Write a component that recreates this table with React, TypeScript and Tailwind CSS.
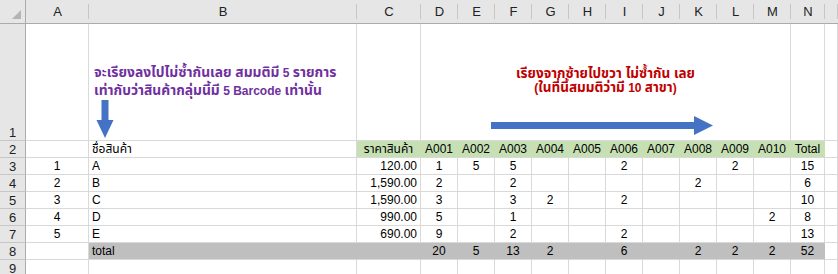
import type { ReactNode } from 'react';

const COLS = ['A', 'B', 'C', 'D', 'E', 'F', 'G', 'H', 'I', 'J', 'K', 'L', 'M', 'N', ''];
const BRANCHES = ['A001', 'A002', 'A003', 'A004', 'A005', 'A006', 'A007', 'A008', 'A009', 'A010'];

// qty per branch, index 0 = A001
const ROWS = [
  { no: 1, name: 'A', price: '120.00', qty: [1, 5, 5, null, null, 2, null, null, 2, null], total: 15 },
  { no: 2, name: 'B', price: '1,590.00', qty: [2, null, 2, null, null, null, null, 2, null, null], total: 6 },
  { no: 3, name: 'C', price: '1,590.00', qty: [3, null, 3, 2, null, 2, null, null, null, null], total: 10 },
  { no: 4, name: 'D', price: '990.00', qty: [5, null, 1, null, null, null, null, null, null, 2], total: 8 },
  { no: 5, name: 'E', price: '690.00', qty: [9, null, 2, null, null, 2, null, null, null, null], total: 13 },
];
const TOTALS = [20, 5, 13, 2, null, 6, null, 2, 2, 2];

type Fill = 'green' | 'gray' | undefined;

function Cell({
  children,
  align = 'left',
  fill,
  className = '',
}: {
  children?: ReactNode;
  align?: 'left' | 'center' | 'right';
  fill?: Fill;
  className?: string;
}) {
  const bg =
    fill === 'green'
      ? 'bg-[#c6e0b4] border-r-transparent'
      : fill === 'gray'
        ? 'bg-[#bfbfbf] border-r-transparent border-b-[#bfbfbf]'
        : 'bg-white border-r-[#d9d9d9]';
  const justify = align === 'center' ? 'justify-center' : align === 'right' ? 'justify-end' : 'justify-start';
  return (
    <div
      className={`flex items-end ${justify} border-r border-b border-b-[#d9d9d9] px-[3px] leading-[15px] whitespace-nowrap overflow-hidden ${bg} ${className}`}
    >
      {children}
    </div>
  );
}

function RowHead({ n }: { n: number }) {
  return (
    <div className="flex items-end justify-center bg-[#e6e6e6] border-r border-r-[#ababab] border-b border-b-[#c6c6c6] text-[#222] text-[13px] leading-[15px]">
      {n}
    </div>
  );
}

function DownArrow() {
  return (
    <svg width="18" height="38" viewBox="0 0 18 38" className="shrink-0 ml-[2px]">
      <path d="M5.5 0 H12.5 V20 H17.5 L9 38 L0.5 20 H5.5 Z" fill="#4472c4" />
    </svg>
  );
}

function RightArrow() {
  return (
    <svg width="222" height="19" viewBox="0 0 222 19" className="shrink-0">
      <path d="M0 6 H203 V0 L222 9.5 L203 19 V13 H0 Z" fill="#4472c4" />
    </svg>
  );
}

export default function App() {
  return (
    <div className="w-[838px] h-[274px] overflow-hidden bg-white font-['Liberation_Sans',Arial,'Noto_Sans_Thai','Noto_Sans',sans-serif] text-[12px] text-black">
      <div className="grid grid-cols-[26px_63px_268px_64px_repeat(10,37px)_34px_1fr] grid-rows-[24px_117px_repeat(8,17px)]">
        {/* column headers */}
        <div className="relative bg-[#e6e6e6] border-r border-r-[#ababab] border-b border-b-[#ababab]">
          <div className="absolute right-[4px] bottom-[4px] w-0 h-0 border-l-[9px] border-l-transparent border-b-[9px] border-b-[#b4b4b4]" />
        </div>
        {COLS.map((c, i) => (
          <div
            key={i}
            className="flex items-center justify-center bg-[#e6e6e6] border-b border-b-[#ababab] text-[13px] text-[#222] relative after:content-[''] after:absolute after:right-0 after:top-[4px] after:bottom-[4px] after:w-px after:bg-[#c6c6c6]"
          >
            {c}
          </div>
        ))}

        {/* row 1 */}
        <RowHead n={1} />
        <Cell />
        <div className="flex flex-col justify-end border-r border-r-[#d9d9d9] border-b border-b-[#d9d9d9] pl-[5px] pb-[2px]">
          <div className="font-bold text-[#7030a0] text-[12px] leading-[17px] whitespace-nowrap">
            <div>
              <span className="text-[13.8px]">จะเรียงลงไปไม่ซ้ำกันเลย สมมติมี</span> 5{' '}
              <span className="text-[13.8px]">รายการ</span>
            </div>
            <div>
              <span className="text-[13.8px]">เท่ากับว่าสินค้ากลุ่มนี้มี</span> 5 Barcode{' '}
              <span className="text-[13.8px]">เท่านั้น</span>
            </div>
          </div>
          <DownArrow />
        </div>
        <Cell />
        <div className="col-span-10 flex flex-col justify-end border-r border-r-[#d9d9d9] border-b border-b-[#d9d9d9] pb-[5px]">
          <div className="font-bold text-[#c00000] text-[12px] leading-[14px] text-center whitespace-nowrap">
            <div className="text-[13.5px]">เรียงจากซ้ายไปขวา ไม่ซ้ำกัน เลย</div>
            <div>
              (<span className="text-[13.5px]">ในที่นี้สมมติว่ามี</span> 10{' '}
              <span className="text-[13.5px]">สาขา</span>)
            </div>
          </div>
          <div className="mt-[21px] ml-[70px]">
            <RightArrow />
          </div>
        </div>
        <Cell />
        <Cell />

        {/* row 2 */}
        <RowHead n={2} />
        <Cell />
        <Cell>ชื่อสินค้า</Cell>
        <Cell fill="green" align="center">ราคาสินค้า</Cell>
        {BRANCHES.map((b) => (
          <Cell key={b} fill="green" align="center">
            {b}
          </Cell>
        ))}
        <Cell fill="green" align="center">Total</Cell>
        <Cell />

        {/* rows 3-7 */}
        {ROWS.map((r, i) => (
          <div key={r.no} className="contents">
            <RowHead n={i + 3} />
            <Cell align="center">{r.no}</Cell>
            <Cell>{r.name}</Cell>
            <Cell align="right">{r.price}</Cell>
            {r.qty.map((q, j) => (
              <Cell key={j} align="center">
                {q}
              </Cell>
            ))}
            <Cell align="center">{r.total}</Cell>
            <Cell />
          </div>
        ))}

        {/* row 8 total */}
        <RowHead n={8} />
        <Cell />
        <Cell fill="gray">total</Cell>
        <Cell fill="gray" />
        {TOTALS.map((t, j) => (
          <Cell key={j} fill="gray" align="center">
            {t}
          </Cell>
        ))}
        <Cell fill="gray" align="center">52</Cell>
        <Cell />

        {/* row 9 */}
        <RowHead n={9} />
        {COLS.map((_, j) => (
          <Cell key={j} />
        ))}
      </div>
    </div>
  );
}
